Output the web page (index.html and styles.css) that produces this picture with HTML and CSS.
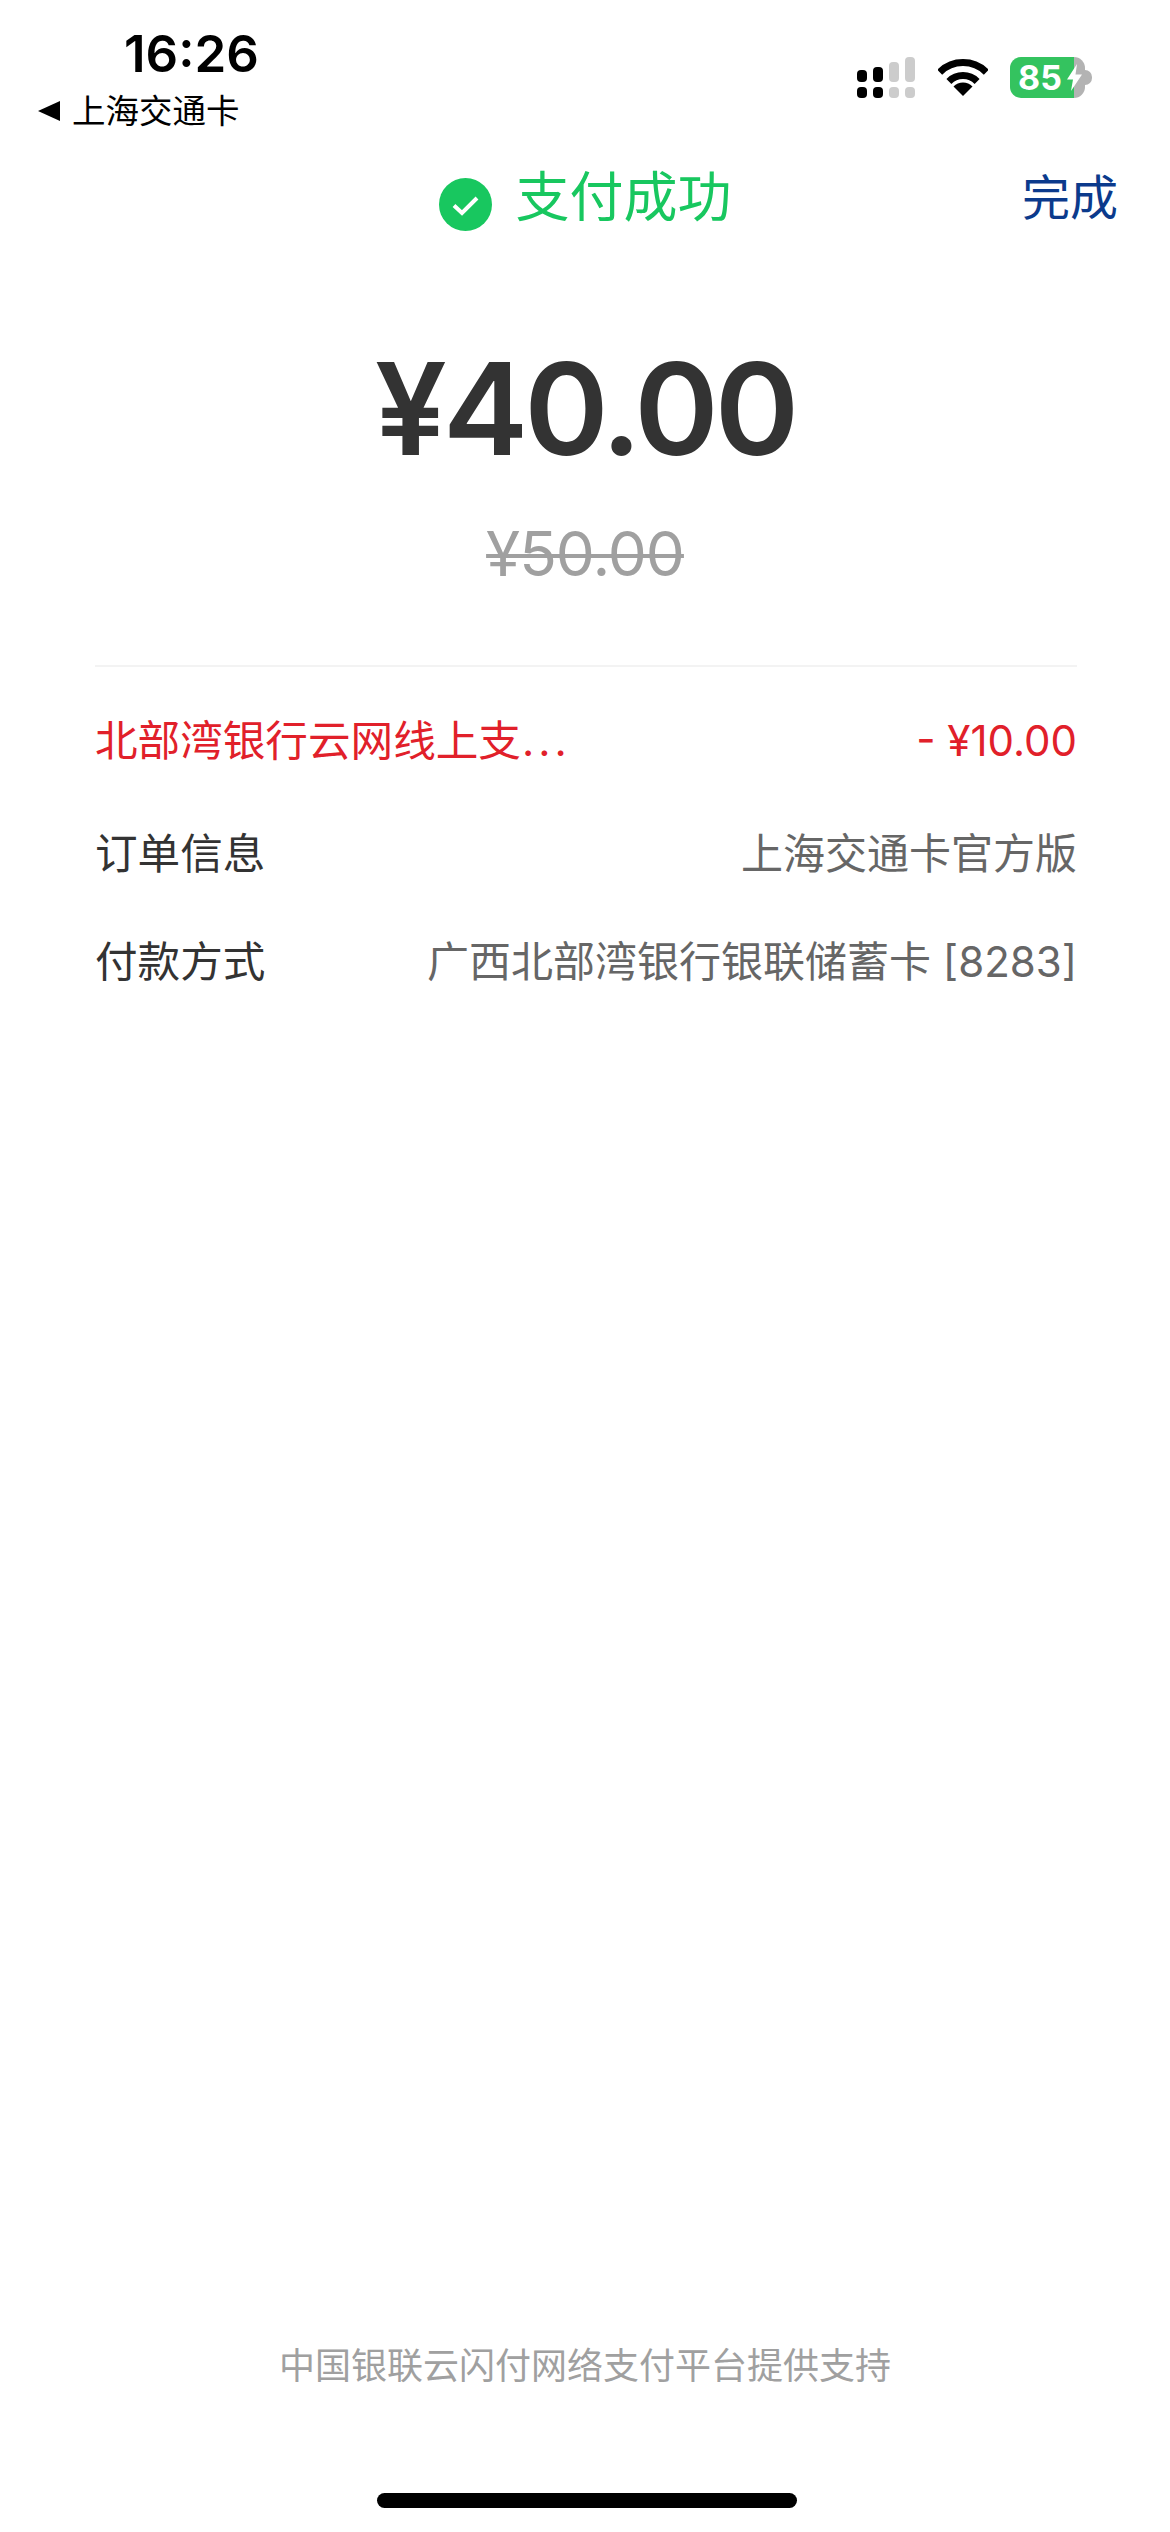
FILE: index.html
```html
<!DOCTYPE html>
<html lang="zh-CN">
<head>
	<meta charset="UTF-8">
	<title>支付成功</title>
	<link rel="stylesheet" href="styles.css">
</head>
<body>
	<div class="page">
		<div class="status-bar">
			<div class="status-left">
				<div class="time">16:26</div>
				<div class="back-app"><span class="back-arrow"></span>上海交通卡</div>
			</div>
			<div class="status-right">
				<svg class="signal" width="58" height="41" viewBox="0 0 58 41">
					<rect x="0" y="13" width="10" height="12" rx="4" fill="#000"/>
					<rect x="16" y="10" width="10" height="15" rx="4" fill="#000"/>
					<rect x="32" y="5" width="10" height="20" rx="4" fill="#ccc"/>
					<rect x="48" y="0" width="10" height="25" rx="4" fill="#ccc"/>
					<rect x="0" y="30" width="10" height="11" rx="4" fill="#000"/>
					<rect x="16" y="30" width="10" height="11" rx="4" fill="#000"/>
					<rect x="32" y="30" width="10" height="11" rx="4" fill="#ccc"/>
					<rect x="48" y="30" width="10" height="11" rx="4" fill="#ccc"/>
				</svg>
				<svg class="wifi" width="50" height="37" viewBox="0 0 50 37">
					<path d="M1.7 13.2A33 33 0 0 1 48.3 13.2" fill="none" stroke="#000" stroke-width="7"/>
					<path d="M10.9 22.4A20 20 0 0 1 39.1 22.4" fill="none" stroke="#000" stroke-width="7"/>
					<path d="M25 37L15.5 27.5A13.4 13.4 0 0 1 34.5 27.5Z" fill="#000"/>
				</svg>
				<div class="battery">
					<span class="battery-num">85</span>
					<svg class="bolt" width="15" height="27" viewBox="0 0 15 27">
						<path d="M10 0L0 15.5H6L4 27L15 10.5H8.5Z" fill="#fff"/>
					</svg>
				</div>
				<span class="battery-tip"></span>
			</div>
		</div>

		<div class="nav-bar">
			<div class="nav-title">
				<svg class="ok-icon" width="53" height="53" viewBox="0 0 53 53">
					<circle cx="26.5" cy="26.5" r="26.5" fill="#18c75f"/>
					<path d="M15 27.5L23 35L38 20" fill="none" stroke="#fff" stroke-width="4"/>
				</svg>
				<span>支付成功</span>
			</div>
			<a class="nav-done">完成</a>
		</div>

		<div class="amount">¥40.00</div>
		<div class="amount-old">¥50.00</div>

		<div class="info">
			<div class="row row-discount">
				<span class="row-label">北部湾银行云网线上支<span class="dots">...</span></span>
				<span class="row-num">- ¥10.00</span>
			</div>
			<div class="row row-order">
				<span class="row-label">订单信息</span>
				<span class="row-value">上海交通卡官方版</span>
			</div>
			<div class="row row-pay">
				<span class="row-label">付款方式</span>
				<span class="row-value">广西北部湾银行银联储蓄卡 [8283]</span>
			</div>
		</div>

		<div class="footer">中国银联云闪付网络支付平台提供支持</div>
		<div class="home-bar"></div>
	</div>
</body>
</html>
```

FILE: styles.css
```css
/*--reset--*/
html, body {
	margin: 0;
	padding: 0;
	background: #fff;
}
body {
	font-family: Inter, "Noto Sans CJK SC", sans-serif;
	color: #333;
}
.page {
	height: 2532px;
	display: flex;
	flex-direction: column;
	overflow: hidden;
}

/**
 * status bar
 */
.status-bar {
	height: 165px;
	box-sizing: border-box;
	padding: 24px 78px 0 38px;
	display: flex;
	justify-content: space-between;
	color: #000;
}
.time {
	margin-left: 86px;
	font-size: 51px;
	font-weight: 600;
	line-height: 60px;
}
.back-app {
	display: flex;
	align-items: center;
	margin-top: 3px;
	font-size: 33.5px;
	line-height: 48px;
}
.back-arrow {
	width: 0;
	height: 0;
	margin-right: 12px;
	border-top: 10px solid transparent;
	border-bottom: 10px solid transparent;
	border-right: 22px solid #000;
}
.status-right {
	display: flex;
	align-items: flex-start;
	padding-top: 33px;
}
.signal {
	margin-right: 23px;
}
.wifi {
	margin-top: 2px;
	margin-right: 22px;
}
.battery {
	width: 75px;
	height: 41px;
	box-sizing: border-box;
	padding-left: 8px;
	display: flex;
	align-items: center;
	gap: 5px;
	border-radius: 11px;
	background: linear-gradient(90deg, #34c35f 64px, #b3b3b3 64px);
	color: #fff;
}
.battery-num {
	font-size: 34px;
	font-weight: 700;
	line-height: 41px;
}
.battery-tip {
	width: 7px;
	height: 15px;
	margin-top: 13px;
	border-radius: 0 8px 8px 0;
	background: #b3b3b3;
}

/**
 * nav
 */
.nav-bar {
	height: 66px;
	display: grid;
	grid-template-columns: 1fr auto 1fr;
	align-items: center;
	padding: 0 52px;
}
.nav-title {
	grid-column: 2;
	display: flex;
	align-items: center;
	gap: 24px;
	font-size: 54px;
	line-height: 66px;
	color: #18c75f;
}
.ok-icon {
	margin-top: 13px;
}
.nav-done {
	grid-column: 3;
	justify-self: end;
	font-size: 48px;
	line-height: 66px;
	color: #0b3a8c;
}

/**
 * amount
 */
.amount {
	margin-top: 108px;
	text-align: center;
	font-size: 128px;
	font-weight: 600;
	letter-spacing: -4px;
	line-height: 140px;
	color: #333;
}
.amount-old {
	margin-top: 35px;
	text-align: center;
	font-size: 62px;
	letter-spacing: -1px;
	line-height: 80px;
	color: #a0a0a0;
	text-decoration: line-through;
	text-decoration-thickness: 4px;
}

/**
 * info rows
 */
.info {
	margin: 71px 93px 0 95px;
	padding-top: 44px;
	border-top: 2px solid #f3f3f3;
}
.row {
	display: flex;
	justify-content: space-between;
	font-size: 42px;
	line-height: 60px;
}
.row-label {
	font-size: 42.6px;
}
.row-discount {
	color: #e1202a;
}
.dots {
	margin-left: 1px;
	letter-spacing: 4px;
}
.row-order {
	margin-top: 53px;
}
.row-pay {
	margin-top: 48px;
}
.row-value {
	color: #666;
}

/**
 * footer
 */
.footer {
	margin-top: auto;
	text-align: center;
	font-size: 36px;
	line-height: 50px;
	color: #a0a0a0;
}
.home-bar {
	width: 420px;
	height: 15px;
	margin: 102px 0 24px 377px;
	border-radius: 8px;
	background: #000;
}
```
